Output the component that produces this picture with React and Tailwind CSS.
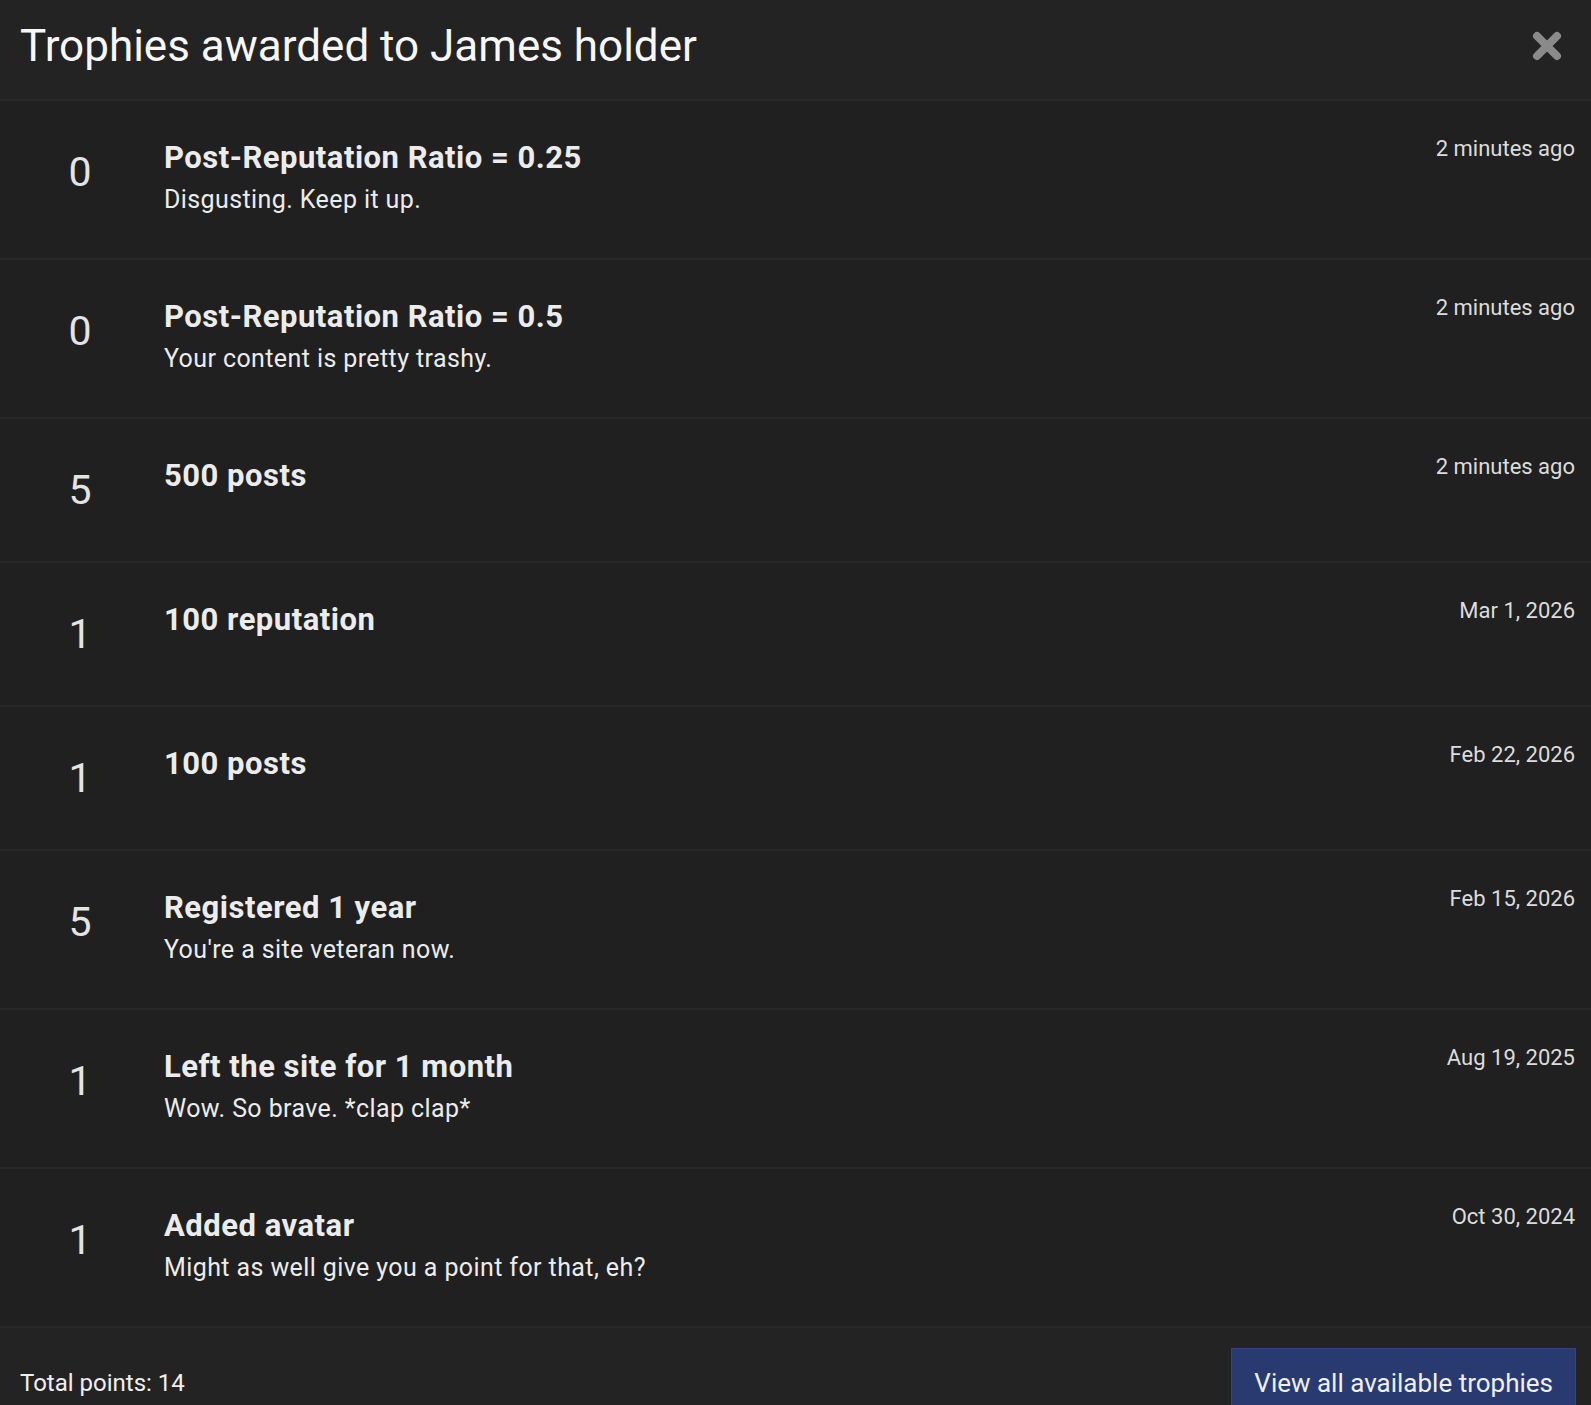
const trophies = [
  { points: 0, title: "Post-Reputation Ratio = 0.25", desc: "Disgusting. Keep it up.", date: "2 minutes ago" },
  { points: 0, title: "Post-Reputation Ratio = 0.5", desc: "Your content is pretty trashy.", date: "2 minutes ago" },
  { points: 5, title: "500 posts", date: "2 minutes ago" },
  { points: 1, title: "100 reputation", date: "Mar 1, 2026" },
  { points: 1, title: "100 posts", date: "Feb 22, 2026" },
  { points: 5, title: "Registered 1 year", desc: "You're a site veteran now.", date: "Feb 15, 2026" },
  { points: 1, title: "Left the site for 1 month", desc: "Wow. So brave. *clap clap*", date: "Aug 19, 2025" },
  { points: 1, title: "Added avatar", desc: "Might as well give you a point for that, eh?", date: "Oct 30, 2024" },
];

function CloseIcon() {
  return (
    <svg width="32" height="32" viewBox="0 0 32 32" aria-hidden="true">
      <path
        d="M6 6 L26 26 M26 6 L6 26"
        stroke="#8a8a8a"
        strokeWidth="8"
        strokeLinecap="round"
      />
    </svg>
  );
}

function TrophyRow({ trophy }) {
  return (
    <li className="flex items-start border-b-2 border-[#282828] py-[37px] pl-[20px] pr-[16px]">
      <div className="w-[120px] shrink-0 text-center text-[41px] leading-[68px] text-[#e4e4e4]">
        {trophy.points}
      </div>
      <div className="ml-[24px] flex-1 min-w-0">
        <h3 className="text-[31px] font-bold leading-[40px] tracking-[0.5px] text-[#ececec]">
          {trophy.title}
        </h3>
        {trophy.desc && (
          <p className="text-[25px] leading-[43px] tracking-[0.4px] text-[#ececec]">
            {trophy.desc}
          </p>
        )}
      </div>
      <div className="shrink-0 -mt-[4px] text-[22px] leading-[30px] text-[#dcdcdc]">
        {trophy.date}
      </div>
    </li>
  );
}

export default function App() {
  return (
    <div
      className="min-h-screen w-full bg-[#202020]"
      style={{ fontFamily: "Roboto, 'Noto Sans', Arial, sans-serif" }}
    >
      <div className="flex h-[101px] items-center justify-between border-b-2 border-[#282828] bg-[#232323] pl-[20px] pr-[28px]">
        <h2 className="-mt-[8px] text-[44px] leading-none text-[#f7f7f7]">
          Trophies awarded to James holder
        </h2>
        <button type="button" className="-mt-[7px]">
          <CloseIcon />
        </button>
      </div>

      <ul>
        {trophies.map((t, i) => (
          <TrophyRow key={i} trophy={t} />
        ))}
      </ul>

      <div className="flex items-start justify-between bg-[#232323] pl-[20px] pr-[15px] pt-[20px] pb-[20px]">
        <div className="pt-[20px] text-[24px] leading-[30px] text-[#efefef]">
          Total points: 14
        </div>
        <button
          type="button"
          className="border border-[#33457a] bg-[#283a6f] px-[22px] pt-[17px] pb-[20px] text-[26px] leading-[34px] text-[#eef0f6]"
        >
          View all available trophies
        </button>
      </div>
    </div>
  );
}
